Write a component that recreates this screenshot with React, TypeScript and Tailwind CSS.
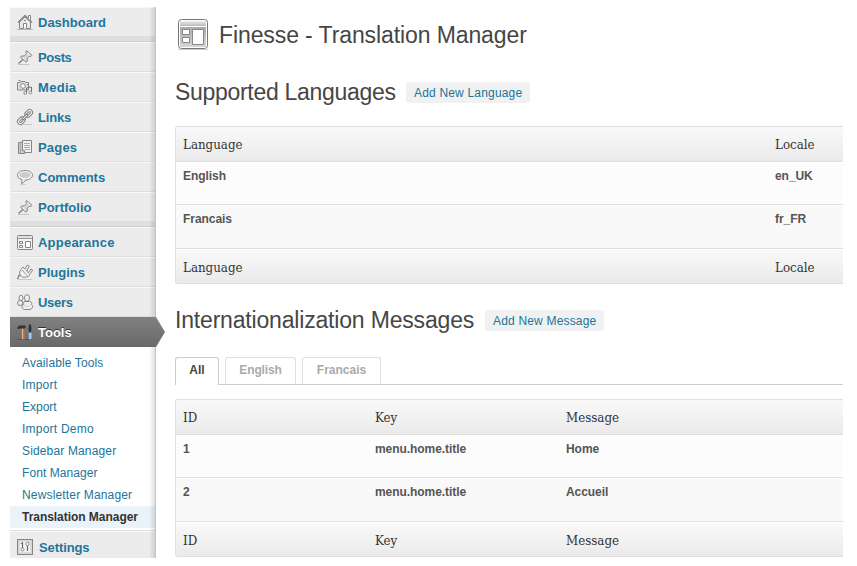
import React from "react";

const iconPaths: Record<string, React.ReactNode> = {
  home: (
    <>
      <path d="M0 15.500h16" stroke="#bbb" />
      <path d="M2.500 8v6.500h11V8L8 3z" fill="#e8e8e8" />
      <path d="M1 8.500L8 1.500l7 7" strokeWidth="1.500" />
      <path d="M11.500 4.500v-3h2v5" fill="#fff" />
      <path d="M6.500 14.500V9.500h3v5" fill="#fff" />
      <path d="M7 6.500h2" />
    </>
  ),
  pin: (
    <>
      <path d="M1 15.500h11" stroke="#c4c4c4" />
      <path d="M6.500 10L1.500 14.500" strokeWidth="1.500" />
      <path d="M9.500 1.500l5.500 4.800-1.200 1.200-1.600-.3-2 2 .2 2.800-1.400 1.200-5.500-5L4.700 6.900l2.600.1 2.200-2.200-.7-1.800z" fill="#d8d8d8" />
      <path d="M10 3.500l3 2.800M5.500 8.500l3 2.800" stroke="#fff" />
    </>
  ),
  media: (
    <>
      <path d="M.5 3.500h3l.5-1h4l.5 1h3v7.500H.5z" fill="#ddd" />
      <circle cx="6" cy="7" r="2.300" fill="#fff" />
      <path d="M1.500 1.500h2M10 5.500h1" />
      <path d="M9.500 14V9l5-1V13" fill="none" stroke="#777" />
      <circle cx="8.300" cy="14" r="1.400" fill="#fff" />
      <circle cx="13.300" cy="13.500" r="1.400" fill="#fff" />
    </>
  ),
  link: (
    <>
      <path d="M2 15.500h13" stroke="#c8c8c8" />
      <g transform="rotate(-45 8 8)">
        <rect x="-1.500" y="5" width="8.500" height="6" rx="3" fill="#f4f4f4" />
        <rect x=".8" y="7" width="4" height="2" rx="1" fill="#ddd" />
        <rect x="9" y="5" width="8.500" height="6" rx="3" fill="#f4f4f4" />
        <rect x="11.200" y="7" width="4" height="2" rx="1" fill="#ddd" />
        <path d="M4.500 8h7" stroke="#777" strokeWidth="2.600" />
        <path d="M5.200 8h5.600" stroke="#fff" />
      </g>
    </>
  ),
  pages: (
    <>
      <path d="M1.500 3.500h6v11h-6z" fill="#ccc" />
      <path d="M3.500 2.500v12" stroke="#aaa" />
      <path d="M5.500 1.500h9v12h-7l-2-2z" fill="#f1f1f1" />
      <path d="M7 4.500h6M7 6.500h6M7 8.500h6M8 10.500h5" stroke="#aaa" />
      <path d="M5.500 11.500h2v2" fill="#fff" />
    </>
  ),
  comment: (
    <>
      <path d="M3 15.500h6" stroke="#ccc" />
      <path d="M8 1.500c4.500 0 7.500 2 7.500 4.700S12.500 11 8.500 11c-.8 1.500-2.200 3-4 3.600.5-1.200.7-2.300.5-4C2.300 10 .5 8.300.5 6.300.5 3.500 3.500 1.500 8 1.500z" fill="#f4f4f4" />
      <ellipse cx="8" cy="6" rx="5.800" ry="3" fill="#ccc" stroke="none" />
    </>
  ),
  window: (
    <>
      <rect x=".5" y="1.500" width="15" height="14" rx="1" fill="#f3f3f3" />
      <path d="M1 4.500h14" stroke="#999" />
      <path d="M1.500 3h13" stroke="#ccc" />
      <path d="M2.500 7.500h3v2h-3zM2.500 11.500h3v2h-3zM8.500 7.500h5v6h-5z" fill="#fff" />
    </>
  ),
  plug: (
    <>
      <path d="M1 15.500h14" stroke="#c8c8c8" />
      <path d="M.5 15l1.500-3.500L4 10" strokeWidth="1.500" />
      <path d="M6 3l7 7.500c-1.500 2-5 3.500-7.500 2.500l-2.500-2c-1-2.500.7-6 3-8z" fill="#f3f3f3" />
      <path d="M7.500 5l3-4 1.700 1.200L9.500 7M11 9l3-4 1.700 1.200-3.200 4.300" fill="#eee" />
      <path d="M5 6l5 5.500" stroke="#999" />
    </>
  ),
  users: (
    <>
      <ellipse cx="4" cy="4" rx="2" ry="2.700" fill="#f4f4f4" />
      <ellipse cx="3.200" cy="9" rx="2.700" ry="2.500" fill="#eee" />
      <ellipse cx="10" cy="4" rx="2.500" ry="3.300" fill="#f4f4f4" />
      <path d="M8 7.500c-2 .5-2 2-1.500 3-2 .8-2 4.500 1 5h4.500c4 0 4.500-4 2.500-5 .8-1.500 0-3-2-3z" fill="#eee" />
      <path d="M7 11c2 2 5 2 7 0" stroke="#ccc" />
    </>
  ),
  settings: (
    <>
      <rect x=".5" y=".5" width="15" height="15" fill="#e2e2e2" />
      <rect x="2" y="2" width="12" height="12" fill="#f4f4f4" stroke="#c8c8c8" />
      <path d="M5.500 3v6M10.500 7v5" strokeWidth="1.200" stroke="#666" />
      <circle cx="5.500" cy="10.500" r="1.500" fill="#fff" />
      <circle cx="10.500" cy="5" r="1.700" fill="#fff" />
      <path d="M3.500 4.500h2" />
    </>
  ),
};

function MenuIcon({ name }: { name: string }) {
  return (
    <svg width="16" height="16" viewBox="0 0 16 16" fill="none" stroke="#858585" strokeWidth="1" className="shrink-0 overflow-visible">
      {iconPaths[name]}
    </svg>
  );
}

function ToolsIcon() {
  return (
    <svg width="16" height="17" viewBox="0 0 16 17" className="shrink-0">
      <path d="M0 15.500h15" stroke="#555" />
      <path d="M4.500 4h3l.3 11.500h-3z" fill="#b97850" />
      <path d="M5.500 5v10" stroke="#e7b392" />
      <path d="M0 4l2-2.500h6l1 1.500-1 1.500H3.500L1 5z" fill="#343434" />
      <path d="M12 .5h2l.5 5-.8 3h-1.400l-.8-3z" fill="#333" />
      <rect x="11.500" y="8.500" width="3.500" height="7" rx="1" fill="#7ba4d2" />
      <path d="M13 9v6" stroke="#dbeafb" />
    </svg>
  );
}

function MenuItem({ icon, label, className = "h-[30px]", text = "" }: { icon: string; label: string; className?: string; text?: string }) {
  return (
    <li className={`flex items-center gap-[5px] border-t border-b border-t-[#f9f9f9] border-b-[#dfdfdf] bg-[#ececec] pl-[7px] ${className}`}>
      <MenuIcon name={icon} />
      <span className={`pt-[2px] text-[13px] leading-[18px] font-bold text-[#21759b] ${text}`}>{label}</span>
    </li>
  );
}

function Separator() {
  return <li className="h-[5px] border-b border-[#cfcfcf] bg-[#dfdfdf]" />;
}

const submenu = [
  ["Available Tools", "tracking-[0.12px]"],
  ["Import", "tracking-[0.2px]"],
  ["Export", "tracking-[0px]"],
  ["Import Demo", "tracking-[0.22px]"],
  ["Sidebar Manager", "tracking-[0.15px]"],
  ["Font Manager", "tracking-[0.07px]"],
  ["Newsletter Manager", "tracking-[0.16px]"],
];

function Sidebar() {
  return (
    <nav className="relative h-[551px] w-[146px] shrink-0">
      <ul className="h-[551px] overflow-hidden">
        <MenuItem icon="home" label="Dashboard" />
        <Separator />
        <MenuItem icon="pin" label="Posts" text="tracking-[-0.4px]" />
        <MenuItem icon="media" label="Media" text="tracking-[0.3px]" />
        <MenuItem icon="link" label="Links" text="tracking-[-0.15px]" />
        <MenuItem icon="pages" label="Pages" text="tracking-[0.2px]" />
        <MenuItem icon="comment" label="Comments" />
        <MenuItem icon="pin" label="Portfolio" />
        <Separator />
        <MenuItem icon="window" label="Appearance" text="tracking-[0.22px]" />
        <MenuItem icon="plug" label="Plugins" />
        <MenuItem icon="users" label="Users" text="tracking-[-0.3px]" />
        <li className="h-[30px]" />
        <li>
          <ul className="h-[184px] border-b border-[#dfdfdf] pt-[5px] text-[12px] leading-[22px] text-[#21759b]">
            {submenu.map(([label, tracking]) => (
              <li key={label} className={`h-[22px] pl-3 ${tracking}`}>{label}</li>
            ))}
            <li className="h-[22px] bg-[#eaf2fa] pl-3 font-bold tracking-[-0.04px] text-[#333]">Translation Manager</li>
          </ul>
        </li>
        <MenuItem icon="settings" label="Settings" className="h-[32px]" text="ml-px tracking-[-0.1px]" />
      </ul>
      <div className="absolute inset-y-0 right-0 w-[7px] border-r border-[#c4c4c4] bg-gradient-to-r from-transparent to-black/12" />
      <div className="absolute top-[310px] left-0 flex h-[30px] w-[155px] items-center gap-[5px] bg-gradient-to-b from-[#818181] to-[#696969] pl-[7px] [clip-path:polygon(0_0,146px_0,155px_50%,146px_100%,0_100%)]">
        <ToolsIcon />
        <span className="pt-[2px] text-[13px] leading-[18px] font-bold text-white [text-shadow:0_-1px_0_#333]">Tools</span>
      </div>
    </nav>
  );
}

function PageIcon() {
  return (
    <svg width="32" height="33" viewBox="0 0 32 33" className="shrink-0">
      <defs>
        <linearGradient id="bar" x2="0" y2="1">
          <stop stopColor="#f0f0f0" />
          <stop offset="1" stopColor="#b8b8b8" />
        </linearGradient>
        <linearGradient id="panel" x2="0" y2="1">
          <stop stopColor="#aaa" />
          <stop offset="1" stopColor="#d5d5d5" />
        </linearGradient>
      </defs>
      <path d="M1 31.500h30" stroke="#ccc" />
      <rect x="1.500" y="1.500" width="29" height="29" rx="3" fill="#fff" stroke="#777" />
      <rect x="3" y="3" width="26" height="5" fill="url(#bar)" />
      <rect x="3" y="9" width="26" height="20" fill="url(#panel)" />
      <path d="M5.500 11.500h7v5h-7zM5.500 19.500h7v5h-7zM15.500 11.500h11v15h-11z" fill="#fff" stroke="#888" />
    </svg>
  );
}

function AddButton({ children, className }: { children: React.ReactNode; className: string }) {
  return (
    <button className={`flex h-[21px] items-center rounded-[3px] bg-[#f1f1f1] pl-2 text-[12px] whitespace-nowrap text-[#21759b] ${className}`}>
      {children}
    </button>
  );
}

function DataTable({ columns, headings, rows }: { columns: string; headings: string[]; rows: string[][] }) {
  const head = `grid ${columns} items-center bg-gradient-to-b from-[#f9f9f9] to-[#eaeaea] pl-[7px] font-['DejaVu_Serif_Condensed','DejaVu_Serif',serif] text-[13.2px] text-[#333]`;
  return (
    <div className="overflow-hidden rounded-l-[3px] border border-r-0 border-[#dfdfdf]">
      <div className={`${head} h-[35px] border-b border-[#dfdfdf] pt-[2px]`}>
        {headings.map((h) => <span key={h}>{h}</span>)}
      </div>
      {rows.map((row, i) => (
        <div
          key={i}
          className={`grid ${columns} border-t border-b border-t-white border-b-[#dfdfdf] pt-[4px] pl-[7px] text-[12px] leading-[18px] font-bold tracking-[-0.06px] text-[#555] ${i === 0 ? "h-[43px] bg-[#fcfcfc]" : "h-[44px] bg-[#f9f9f9]"}`}
        >
          {row.map((cell) => <span key={cell}>{cell}</span>)}
        </div>
      ))}
      <div className={`${head} h-[34px] border-t border-t-white pt-[2px]`}>
        {headings.map((h) => <span key={h}>{h}</span>)}
      </div>
    </div>
  );
}

export default function App() {
  return (
    <div className="flex h-[566px] w-[857px] overflow-hidden bg-white pt-[7px] pl-[10px] font-['Liberation_Sans',Arial,sans-serif]">
      <Sidebar />
      <main className="ml-[19px] w-[668px] shrink-0">
        <header className="flex items-center pt-[11px] pl-[2px]">
          <PageIcon />
          <h1 className="ml-[10px] text-[23px] leading-[32px] tracking-[-0.1px] whitespace-nowrap text-[#464646]">Finesse - Translation Manager</h1>
        </header>

        <section>
          <div className="mt-[24px] flex h-[35px] items-start">
            <h2 className="w-[231px] text-[23px] leading-[35px] tracking-[-0.3px] whitespace-nowrap text-[#464646]">Supported Languages</h2>
            <AddButton className="mt-[7px] w-[124px] tracking-[0.18px]">Add New Language</AddButton>
          </div>
          <div className="mt-[16px]">
            <DataTable
              columns="grid-cols-[592px_1fr]"
              headings={["Language", "Locale"]}
              rows={[["English", "en_UK"], ["Francais", "fr_FR"]]}
            />
          </div>
        </section>

        <section>
          <div className="mt-[19px] flex h-[35px] items-start">
            <h2 className="w-[310px] text-[23px] leading-[35px] tracking-[-0.18px] whitespace-nowrap text-[#464646]">Internationalization Messages</h2>
            <AddButton className="mt-[7px] w-[119px] tracking-[0.18px]">Add New Message</AddButton>
          </div>
          <div className="mt-[19px] flex h-[28px] gap-[6px] border-b border-[#ccc] text-center text-[12px] leading-[25px] font-bold text-[#aaa]">
            <div className="h-[28px] w-[44px] rounded-t-[3px] border border-b-0 border-[#ccc] bg-white text-[#464646]">All</div>
            <div className="w-[71px] rounded-t-[3px] border border-b-0 border-[#dfdfdf] tracking-[-0.15px]">English</div>
            <div className="w-[79px] rounded-t-[3px] border border-b-0 border-[#dfdfdf]">Francais</div>
          </div>
          <div className="mt-[14px]">
            <DataTable
              columns="grid-cols-[192px_191px_1fr]"
              headings={["ID", "Key", "Message"]}
              rows={[["1", "menu.home.title", "Home"], ["2", "menu.home.title", "Accueil"]]}
            />
          </div>
        </section>
      </main>
    </div>
  );
}
